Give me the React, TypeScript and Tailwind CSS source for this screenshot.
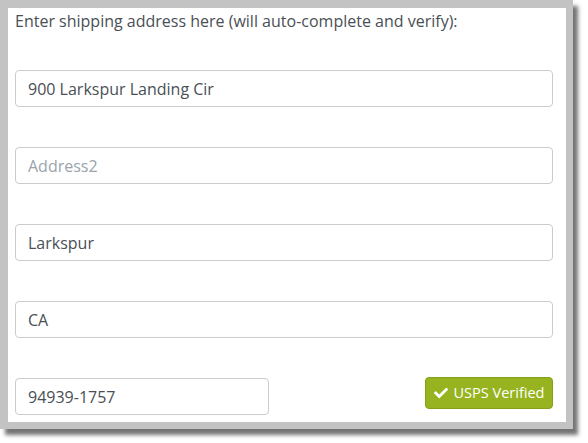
import { FaCheck } from "react-icons/fa";

const field =
  "h-[37px] rounded-[4px] border border-[#cccccc] bg-white px-3 text-[16px] text-[#4a4f55] outline-none placeholder:text-[#9aa3ad]";

export default function App() {
  return (
    <div className="h-[443px] w-[588px] bg-white" style={{ fontFamily: '"Open Sans", "Noto Sans", sans-serif' }}>
      <div className="h-[429px] w-[573px] bg-[#c3c3c3] pb-[7px] pl-2 pr-[7px] pt-2 shadow-[5px_6px_4px_rgba(0,0,0,0.55)]">
        <div className="flex h-full flex-col bg-white pl-[7px] pr-[13px] pt-[2px]">
          <p className="text-[16px] leading-[22px] text-[#4a4f55]">
            Enter shipping address here (will auto-complete and verify):
          </p>
          <div className="mt-[38px] flex flex-col gap-10">
            <input className={field} defaultValue="900 Larkspur Landing Cir" />
            <input className={field} placeholder="Address2" />
            <input className={field} defaultValue="Larkspur" />
            <input className={field} defaultValue="CA" />
            <div className="flex items-start justify-between">
              <input className={`${field} w-[254px]`} defaultValue="94939-1757" />
              <button className="-mt-px flex h-8 w-[128px] items-center justify-center gap-1.5 rounded-[4px] border border-[#86a018] bg-[#97b320] text-[14.5px] text-white">
                <FaCheck className="h-3.5 w-3.5" />
                USPS Verified
              </button>
            </div>
          </div>
        </div>
      </div>
    </div>
  );
}
